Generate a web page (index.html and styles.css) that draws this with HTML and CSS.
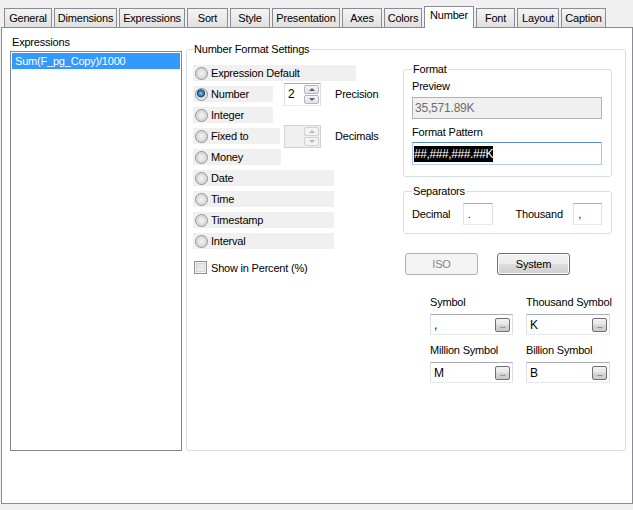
FILE: index.html
```html
<!DOCTYPE html>
<html>
<head>
<meta charset="utf-8">
<title>Number</title>
<link rel="stylesheet" href="styles.css">
</head>
<body>
<div class="tabs">
  <div class="tab w-general">General</div>
  <div class="tab w-dimensions">Dimensions</div>
  <div class="tab w-expressions">Expressions</div>
  <div class="tab w-sort">Sort</div>
  <div class="tab w-style">Style</div>
  <div class="tab w-presentation">Presentation</div>
  <div class="tab w-axes">Axes</div>
  <div class="tab w-colors">Colors</div>
  <div class="tab active w-number">Number</div>
  <div class="tab w-font">Font</div>
  <div class="tab w-layout">Layout</div>
  <div class="tab w-caption">Caption</div>
</div>
<div class="panel">
  <div class="left-col">
    <div class="lbl lbl-expr">Expressions</div>
    <div class="listbox">
      <div class="item selected">Sum(F_pg_Copy)/1000</div>
    </div>
  </div>
  <fieldset class="group main-group">
    <legend>Number Format Settings</legend>
    <div class="group-body">
      <div class="options">
        <div class="opt-row"><span class="opt w163"><span class="radio"></span>Expression Default</span></div>
        <div class="opt-row">
          <span class="opt w80"><span class="radio on"></span>Number</span>
          <span class="spin spin-num"><span class="spin-val">2</span><span class="spin-btns"><span class="sb"><span class="arr up"></span></span><span class="sb"><span class="arr down"></span></span></span></span>
          <span class="spin-lbl">Precision</span>
        </div>
        <div class="opt-row"><span class="opt w80"><span class="radio"></span>Integer</span></div>
        <div class="opt-row">
          <span class="opt w87"><span class="radio"></span>Fixed to</span>
          <span class="spin spin-fix disabled"><span class="spin-val"></span><span class="spin-btns"><span class="sb"><span class="arr up"></span></span><span class="sb"><span class="arr down"></span></span></span></span>
          <span class="spin-lbl">Decimals</span>
        </div>
        <div class="opt-row"><span class="opt w88"><span class="radio"></span>Money</span></div>
        <div class="opt-row"><span class="opt w141"><span class="radio"></span>Date</span></div>
        <div class="opt-row"><span class="opt w141"><span class="radio"></span>Time</span></div>
        <div class="opt-row"><span class="opt w141"><span class="radio"></span>Timestamp</span></div>
        <div class="opt-row"><span class="opt w141"><span class="radio"></span>Interval</span></div>
        <div class="check-row"><span class="checkbox"></span>Show in Percent (%)</div>
      </div>
      <div class="right-col">
        <fieldset class="group fmt">
          <legend>Format</legend>
          <div class="lbl">Preview</div>
          <div class="textbox preview">35,571.89K</div>
          <div class="lbl lbl-pattern">Format Pattern</div>
          <div class="textbox pattern focused"><span class="selection">##,###,###.##K</span></div>
        </fieldset>
        <fieldset class="group sep">
          <legend>Separators</legend>
          <div class="sep-row">
            <span class="sep-lbl w-dec">Decimal</span>
            <span class="textbox small dec">.</span>
            <span class="sep-lbl w-thou">Thousand</span>
            <span class="textbox small thou">,</span>
          </div>
        </fieldset>
        <div class="btn-row">
          <span class="btn disabled iso">ISO</span>
          <span class="btn system">System</span>
        </div>
        <div class="symbols">
          <div class="sym">
            <div class="lbl">Symbol</div>
            <div class="textbox symbox"><span>,</span><span class="dots">...</span></div>
          </div>
          <div class="sym">
            <div class="lbl">Thousand Symbol</div>
            <div class="textbox symbox"><span>K</span><span class="dots">...</span></div>
          </div>
          <div class="sym sym-second">
            <div class="lbl">Million Symbol</div>
            <div class="textbox symbox"><span>M</span><span class="dots">...</span></div>
          </div>
          <div class="sym sym-second">
            <div class="lbl">Billion Symbol</div>
            <div class="textbox symbox"><span>B</span><span class="dots">...</span></div>
          </div>
        </div>
      </div>
    </div>
  </fieldset>
</div>
</body>
</html>
```
FILE: styles.css
```css
html, body {
  margin: 0;
  padding: 0;
}
body {
  width: 633px;
  height: 510px;
  overflow: hidden;
  background: #f0f0f0;
  font-family: "Liberation Sans", Arial, sans-serif;
  font-size: 11px;
  letter-spacing: -0.2px;
  color: #000;
}

/* Tabs */
.tabs {
  display: flex;
  align-items: flex-end;
  height: 27px;
  padding-left: 4px;
  box-sizing: border-box;
}
.tab {
  height: 19px;
  box-sizing: border-box;
  border: 1px solid #898c95;
  border-bottom: none;
  margin-right: 2px;
  background: linear-gradient(#f4f4f4, #ebebeb 50%, #dfdfdf);
  text-align: center;
  line-height: 18px;
  white-space: nowrap;
}
.tab.active {
  height: 22px;
  margin-bottom: -1px;
  background: #fff;
  line-height: 17px;
  position: relative;
  z-index: 1;
}
.w-general { width: 48px; }
.w-dimensions { width: 63px; }
.w-expressions { width: 66px; }
.w-sort { width: 41px; }
.w-style { width: 40px; }
.w-presentation { width: 68px; }
.w-axes { width: 40px; }
.w-colors { width: 38px; }
.w-number { width: 50px; }
.w-font { width: 39px; }
.w-layout { width: 42px; }
.w-caption { width: 45px; }

/* Panel */
.panel {
  margin-left: 1px;
  width: 632px;
  height: 477px;
  box-sizing: border-box;
  border: 1px solid #898c95;
  background: #fff;
  display: flex;
  align-items: flex-start;
  gap: 4px;
  padding: 8px 0 0 8px;
}
.lbl {
  line-height: 13px;
  white-space: nowrap;
}
.lbl-expr {
  margin-left: 2px;
}
.listbox {
  margin-top: 2px;
  width: 172px;
  height: 400px;
  box-sizing: border-box;
  border: 1px solid #828790;
  padding: 1px;
}
.item {
  height: 16px;
  line-height: 16px;
  padding-left: 3px;
}
.item.selected {
  background: #3399ff;
  color: #fff;
}

/* Group boxes */
fieldset.group {
  margin: 0;
  border: 1px solid #d5dfe5;
  border-radius: 3px;
  min-width: 0;
  box-sizing: border-box;
}
fieldset.group legend {
  padding: 0 1px;
  line-height: 13px;
}
fieldset.main-group {
  margin-top: 7px;
  width: 440px;
  height: 408px;
  padding: 9px 12px 0 6px;
}
.group-body {
  display: flex;
}
.options {
  width: 210px;
  display: flex;
  flex-direction: column;
  gap: 5px;
}
.opt-row {
  height: 16px;
  display: flex;
  align-items: center;
}
.opt {
  height: 16px;
  background: #f0f0f0;
  display: flex;
  align-items: center;
  box-sizing: border-box;
  padding-left: 2px;
  white-space: nowrap;
}
.w163 { width: 163px; }
.w80 { width: 80px; }
.w87 { width: 87px; }
.w88 { width: 88px; }
.w141 { width: 141px; }

.radio {
  width: 13px;
  height: 13px;
  box-sizing: border-box;
  border-radius: 50%;
  border: 1px solid #8e8f8f;
  background: radial-gradient(circle at 50% 50%, #f4f4f4 0, #e2e2e2 45%, #d2d2d2 60%, #f6f6f6 75%);
  margin-right: 3px;
  flex: none;
}
.radio.on {
  background: radial-gradient(circle at 45% 40%, #8fd0f2 0, #2f7ab0 28%, #163e66 42%, #e6e6e6 48%, #dcdcdc 62%, #f6f6f6 78%);
}

/* Spinners */
.spin {
  width: 37px;
  height: 23px;
  box-sizing: border-box;
  border: 1px solid;
  border-color: #abadb3 #dbdfe6 #e3e9ef #e2e3ea;
  background: #fff;
  display: flex;
  align-items: center;
  justify-content: space-between;
  flex: none;
}
.spin-num { margin-left: 11px; }
.spin-fix { margin-left: 4px; }
.spin.disabled {
  background: #f0f0f0;
  border-color: #cfd1d6;
}
.spin-val {
  padding-left: 3px;
  font-size: 12px;
}
.spin-btns {
  display: flex;
  flex-direction: column;
  gap: 1px;
  margin-right: 1px;
}
.sb {
  width: 15px;
  height: 9px;
  box-sizing: border-box;
  border: 1px solid #b2b4b8;
  border-radius: 2px;
  background: linear-gradient(#f5f5f5, #e1e1e1);
  display: flex;
  align-items: center;
  justify-content: center;
}
.disabled .sb {
  border-color: #cfd1d6;
  background: #f4f4f4;
}
.arr {
  width: 0;
  height: 0;
  border-left: 3px solid transparent;
  border-right: 3px solid transparent;
}
.arr.up { border-bottom: 3px solid #4e6382; }
.arr.down { border-top: 3px solid #4e6382; }
.disabled .arr.up { border-bottom-color: #b6b6b6; }
.disabled .arr.down { border-top-color: #b6b6b6; }
.spin-lbl {
  margin-left: 14px;
  white-space: nowrap;
}

.check-row {
  margin-top: 7px;
  height: 13px;
  display: flex;
  align-items: center;
  padding-left: 1px;
  white-space: nowrap;
}
.checkbox {
  width: 13px;
  height: 13px;
  box-sizing: border-box;
  border: 1px solid #8e8f8f;
  background: linear-gradient(135deg, #dcdcdc, #f6f6f6);
  box-shadow: inset 0 0 0 1px #f4f4f4, inset 0 0 0 2px #d4d4d4;
  margin-right: 4px;
  flex: none;
}

/* Right column */
.right-col {
  width: 209px;
}
fieldset.fmt {
  margin-top: -2px;
  width: 209px;
  height: 114px;
  padding: 4px 9px 0 8px;
}
.textbox {
  box-sizing: border-box;
  border: 1px solid;
  border-color: #abadb3 #dbdfe6 #e3e9ef #e2e3ea;
  background: #fff;
  white-space: nowrap;
}
.preview {
  margin-top: 4px;
  height: 22px;
  line-height: 20px;
  padding-left: 2px;
  background: #f0f0f0;
  color: #6d6d6d;
  border-color: #adb2b5;
  font-size: 12px;
}
.lbl-pattern {
  margin-top: 7px;
}
.pattern {
  margin-top: 3px;
  height: 23px;
  display: flex;
  align-items: center;
  padding-left: 1px;
}
.pattern.focused {
  border-color: #5b8fc4 #a8c8e8 #b7d3ee #a8c8e8;
}
.selection {
  background: #000;
  color: #fff;
  line-height: 16px;
  font-size: 12px;
  letter-spacing: -0.4px;
}

fieldset.sep {
  margin-top: 8px;
  width: 209px;
  height: 49px;
  padding: 5px 9px 0 8px;
}
.sep-row {
  display: flex;
  align-items: center;
  height: 22px;
}
.sep-lbl {
  white-space: nowrap;
}
.w-dec { width: 51px; }
.w-thou { width: 58px; margin-left: 23px; }
.small {
  height: 22px;
  line-height: 20px;
  padding-left: 4px;
}
.dec { width: 30px; }
.thou { width: 29px; }

.btn-row {
  margin-top: 19px;
  display: flex;
  padding-left: 2px;
  gap: 19px;
}
.btn {
  width: 73px;
  height: 22px;
  box-sizing: border-box;
  border: 1px solid #707070;
  border-radius: 3px;
  background: linear-gradient(#f2f2f2, #ebebeb 50%, #dddddd 51%, #cfcfcf);
  box-shadow: inset 0 0 0 1px #fcfcfc;
  display: flex;
  align-items: center;
  justify-content: center;
}
.btn.disabled {
  border-color: #adb2b5;
  background: #f4f4f4;
  box-shadow: none;
  color: #838383;
}

.symbols {
  margin-top: 21px;
  padding-left: 27px;
  display: grid;
  grid-template-columns: 83px 84px;
  column-gap: 13px;
}
.sym-second {
  margin-top: 9px;
}
.symbox {
  margin-top: 5px;
  height: 21px;
  display: flex;
  align-items: center;
  justify-content: space-between;
  padding-left: 3px;
  font-size: 12px;
}
.dots {
  width: 15px;
  height: 14px;
  box-sizing: border-box;
  border: 1px solid #707070;
  border-radius: 2px;
  background: linear-gradient(#f2f2f2, #e4e4e4 50%, #d6d6d6 51%, #cacaca);
  margin-right: 2px;
  font-size: 8px;
  line-height: 13px;
  text-align: center;
  letter-spacing: -0.5px;
  color: #222;
}
```
